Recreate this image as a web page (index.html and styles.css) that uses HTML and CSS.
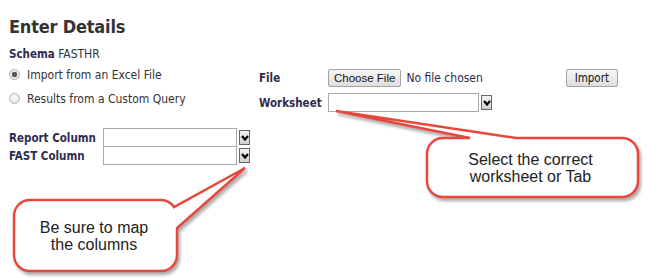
FILE: index.html
```
<!DOCTYPE html>
<html lang="en">
<head>
    <meta charset="UTF-8">
    <title>Enter Details</title>
    <link rel="stylesheet" href="styles.css">
</head>
<body>
    <div class="page">
        <h2 class="title">Enter Details</h2>
        <div class="schema"><b>Schema</b> FASTHR</div>

        <div class="source">
            <div class="options">
                <label class="option"><input type="radio" name="src" checked> Import from an Excel File</label>
                <label class="option"><input type="radio" name="src"> Results from a Custom Query</label>
            </div>
            <div class="file-grid">
                <span class="lbl">File</span>
                <div class="file-row">
                    <button class="btn">Choose File</button>
                    <span class="nofile">No file chosen</span>
                    <button class="btn import">Import</button>
                </div>
                <span class="lbl">Worksheet</span>
                <div class="pick">
                    <span class="box wide"></span>
                    <span class="drop"><svg width="8" height="6" viewBox="0 0 8 6"><path d="M1 1 L4 4.5 L7 1" fill="none" stroke="#000" stroke-width="2.2"/></svg></span>
                </div>
            </div>
        </div>

        <div class="map-grid">
            <span class="lbl">Report Column</span>
            <div class="pick">
                <span class="box"></span>
                <span class="drop"><svg width="8" height="6" viewBox="0 0 8 6"><path d="M1 1 L4 4.5 L7 1" fill="none" stroke="#000" stroke-width="2.2"/></svg></span>
            </div>
            <span class="lbl">FAST Column</span>
            <div class="pick second">
                <span class="box"></span>
                <span class="drop"><svg width="8" height="6" viewBox="0 0 8 6"><path d="M1 1 L4 4.5 L7 1" fill="none" stroke="#000" stroke-width="2.2"/></svg></span>
            </div>
        </div>

        <!-- callouts drawn over the form -->
        <svg class="overlay" width="661" height="278" viewBox="0 0 661 278">
            <defs>
                <filter id="shade" x="-10%" y="-10%" width="130%" height="130%">
                    <feDropShadow dx="2" dy="3" stdDeviation="1.6" flood-color="#777" flood-opacity="0.6"/>
                </filter>
            </defs>
            <path filter="url(#shade)" d="M30 200 H161 A16 16 0 0 1 174 207 L245 168 L177 228 V255 A16 16 0 0 1 161 271 H30 A16 16 0 0 1 14 255 V216 A16 16 0 0 1 30 200 Z"/>
            <path filter="url(#shade)" d="M443 138 H470 L336 111 L516 138 H622 A16 16 0 0 1 638 154 V181 A16 16 0 0 1 622 197 H443 A16 16 0 0 1 427 181 V154 A16 16 0 0 1 443 138 Z"/>
        </svg>
        <div class="note note-map">Be sure to map<br>the columns</div>
        <div class="note note-sheet">Select the correct<br>worksheet or Tab</div>
    </div>
</body>
</html>
```

FILE: styles.css
```
body, html {
    margin: 0;
    background-color: #fff;
    font-family: "DejaVu Sans Condensed", "DejaVu Sans", sans-serif;
    font-size: 12px;
    color: #333;
}
.page {
    position: relative;
    width: 661px;
    height: 278px;
    padding: 0 0 0 9px;
    box-sizing: border-box;
    overflow: hidden;
}
.title {
    margin: 0;
    padding-top: 16px;
    font-size: 18px;
    line-height: 22px;
    letter-spacing: -0.2px;
    color: #333;
}
.schema {
    margin-top: 9px;
    line-height: 14px;
}
.schema b {
    font-size: 11.5px;
    color: #2f2b4c;
}
.source {
    display: flex;
    margin-top: 7px;
}
.options {
    display: flex;
    flex-direction: column;
    gap: 11px;
    width: 250px;
}
.option {
    display: flex;
    align-items: center;
    gap: 7px;
    height: 13px;
}
.option input {
    appearance: none;
    width: 11px;
    height: 11px;
    margin: 0;
    border: 1px solid #b4b4b4;
    border-radius: 50%;
    background: radial-gradient(circle at 50% 40%, #fcfcfc, #dcdcdc);
}
.option input:checked {
    background: radial-gradient(circle, #5a5a5a 0 2.5px, #e6e6e6 3px, #f4f4f4);
}
.file-grid {
    display: grid;
    grid-template-columns: 69px 290px;
    grid-auto-rows: 19px;
    row-gap: 6px;
    align-items: center;
}
.lbl {
    font-size: 11.5px;
    font-weight: bold;
    color: #2f2b4c;
}
.file-row {
    display: flex;
    align-items: center;
}
.btn {
    height: 18px;
    padding: 0 5px;
    font-family: "Liberation Sans", Arial, sans-serif;
    font-size: 11.5px;
    color: #111;
    border: 1px solid #a3a3a3;
    border-radius: 2px;
    background: linear-gradient(#f6f6f6, #dedede);
}
.nofile {
    margin-left: 5px;
    color: #2f2b4c;
}
.import {
    margin-left: auto;
    padding: 0 8px;
    font-family: "DejaVu Sans Condensed", sans-serif;
    font-size: 11.5px;
}
.pick {
    display: flex;
    align-items: center;
    gap: 2px;
}
.box {
    width: 132px;
    height: 17px;
    border: 1px solid #a9a9a9;
    background: #fff;
}
.box.wide {
    width: 149px;
}
.drop {
    display: flex;
    align-items: center;
    justify-content: center;
    width: 9px;
    height: 13px;
    border: 1px solid #666;
    background: linear-gradient(#f4f4f4, #d0d0d0);
}
.map-grid {
    display: grid;
    grid-template-columns: 94px auto;
    align-items: center;
    margin-top: 16px;
}
.pick.second {
    margin-top: -1px;
}
.overlay {
    position: absolute;
    top: 0;
    left: 0;
    pointer-events: none;
}
.overlay path {
    fill: #fff;
    stroke: #e8473d;
    stroke-width: 2.5;
    stroke-linejoin: miter;
}
.note {
    position: absolute;
    display: flex;
    align-items: center;
    justify-content: center;
    text-align: center;
    font-family: "Liberation Sans", Arial, sans-serif;
    font-size: 16px;
    line-height: 17px;
    color: #222;
}
.note-map {
    left: 14px;
    top: 200px;
    width: 160px;
    height: 71px;
}
.note-sheet {
    left: 427px;
    top: 138px;
    width: 207px;
    height: 59px;
}
```
